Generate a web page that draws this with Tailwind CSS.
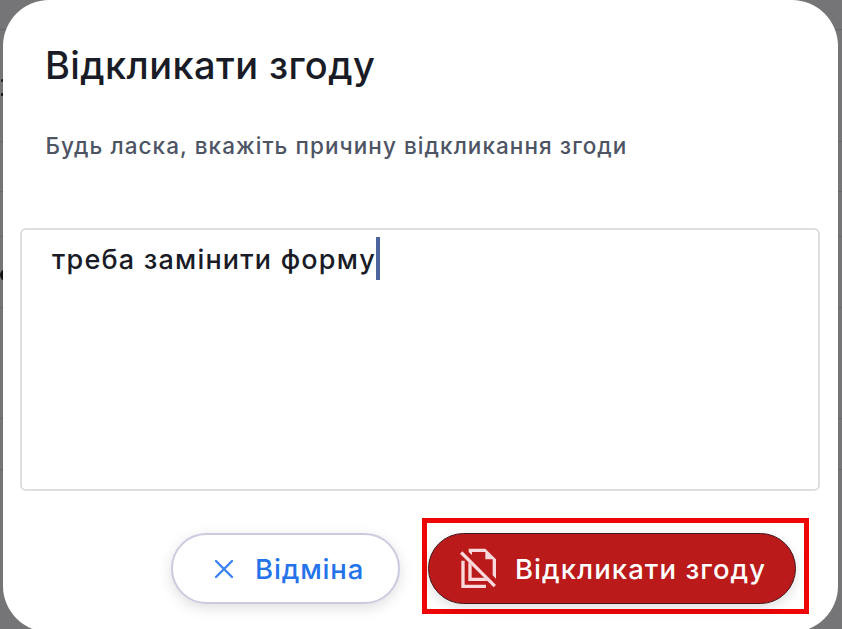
<!DOCTYPE html>
<html lang="uk">
    <head>
        <meta charset="UTF-8">
        <title>Відкликати згоду</title>
        <script src="https://cdn.jsdelivr.net/npm/@tailwindcss/browser@4"></script>
    </head>

    <body class="relative w-[842px] h-[629px] overflow-hidden bg-[#757577] font-['Inter',sans-serif]">
        <!-- page behind the dialog -->
        <div class="absolute inset-0 flex flex-col text-[#111114]" aria-hidden="true">
            <div class="h-[30px] shrink-0 border-b border-[#65656d]"></div>
            <div class="h-[112px] shrink-0 border-b border-[#67676a]"></div>
            <div class="h-[50px] shrink-0 border-b border-[#67676a]"></div>
            <div class="h-[45px] shrink-0 border-b border-[#67676a]"></div>
            <div class="h-[71px] shrink-0 border-b border-[#67676a]"></div>
            <div class="h-[111px] shrink-0 border-b border-[#67676a]"></div>
            <div class="h-[51px] shrink-0 border-b border-[#67676a]"></div>
            <div class="absolute left-[1px] top-[79px] h-[3px] w-4 rounded-full bg-[#1d1d20]"></div>
            <div class="absolute left-[1px] top-[93px] h-[3px] w-4 bg-[#1d1d20]"></div>
            <div class="absolute left-0 top-[269px] h-3 w-4 rounded-full bg-[#111114]"></div>
        </div>

        <div class="relative ml-[3px] w-[835px] h-[632px] rounded-[46px] bg-white flex flex-col pl-[17px] pr-[18px]">
            <h1 class="ml-[25px] mt-[41px] h-[48px] leading-[48px] text-[38px] font-medium tracking-[0.4px] whitespace-nowrap text-[#191c26]">Відкликати згоду</h1>
            <p class="ml-[25.5px] mt-[41px] h-[32px] leading-[32px] text-[22.5px] font-medium tracking-[1.06px] whitespace-nowrap text-[#4d5464]">Будь ласка, вкажіть причину відкликання згоди</p>

            <div class="mt-[66px] h-[263px] shrink-0 rounded-[6px] border-2 border-[#dedede] flex items-start pl-[30px] pt-[7px]">
                <span class="leading-[46px] text-[27px] font-medium tracking-[1.2px] whitespace-nowrap text-[#191c26]">треба замінити форму</span>
                <span class="h-[43px] w-[4px] bg-[#4c659f]"></span>
            </div>

            <div class="mt-[27px] flex justify-end items-start">
                <button type="button" class="mt-[15px] mr-[22px] w-[229px] h-[71px] rounded-full border-2 border-[#cacbe0] bg-white shadow-[0_4px_14px_rgba(0,0,0,0.13)] flex items-center pl-[41px] text-[#2573eb]">
                    <svg class="w-[20px] h-[20px] shrink-0" viewBox="0 0 20 20" fill="none" stroke="#3d82ef" stroke-width="2.4" stroke-linecap="round">
                        <path d="M2 2l16 16M18 2L2 18"/>
                    </svg>
                    <span class="ml-[21px] pt-[2px] text-[27.5px] font-medium tracking-[0.85px] whitespace-nowrap">Відміна</span>
                </button>

                <div class="mr-[11px] w-[387px] h-[96px] border-5 border-[#ec0606] pl-[1px] pt-[10px]">
                    <button type="button" class="w-[368px] h-[71px] rounded-full border border-[#43161b] bg-[#ba1a1a] shadow-[0_4px_12px_rgba(0,0,0,0.13)] flex items-center pl-[31px] text-white">
                        <svg class="w-[36px] h-[41px] shrink-0" viewBox="0 0 108 123" fill="#f9d9dc">
                            <path d="M4 38h10v72h64v10H4z"/>
                            <path d="M25 42l10 10v37h38l10 10H25z"/>
                            <path d="M26 2h50l32 32v58l-10-10V34H76V12H36v9l-10-9z"/>
                            <path d="M0 17l7-7 101 101-7 7z"/>
                        </svg>
                        <span class="ml-[19px] pt-[2px] text-[27.5px] font-medium tracking-[1.05px] whitespace-nowrap">Відкликати згоду</span>
                    </button>
                </div>
            </div>
        </div>
    </body>
</html>
